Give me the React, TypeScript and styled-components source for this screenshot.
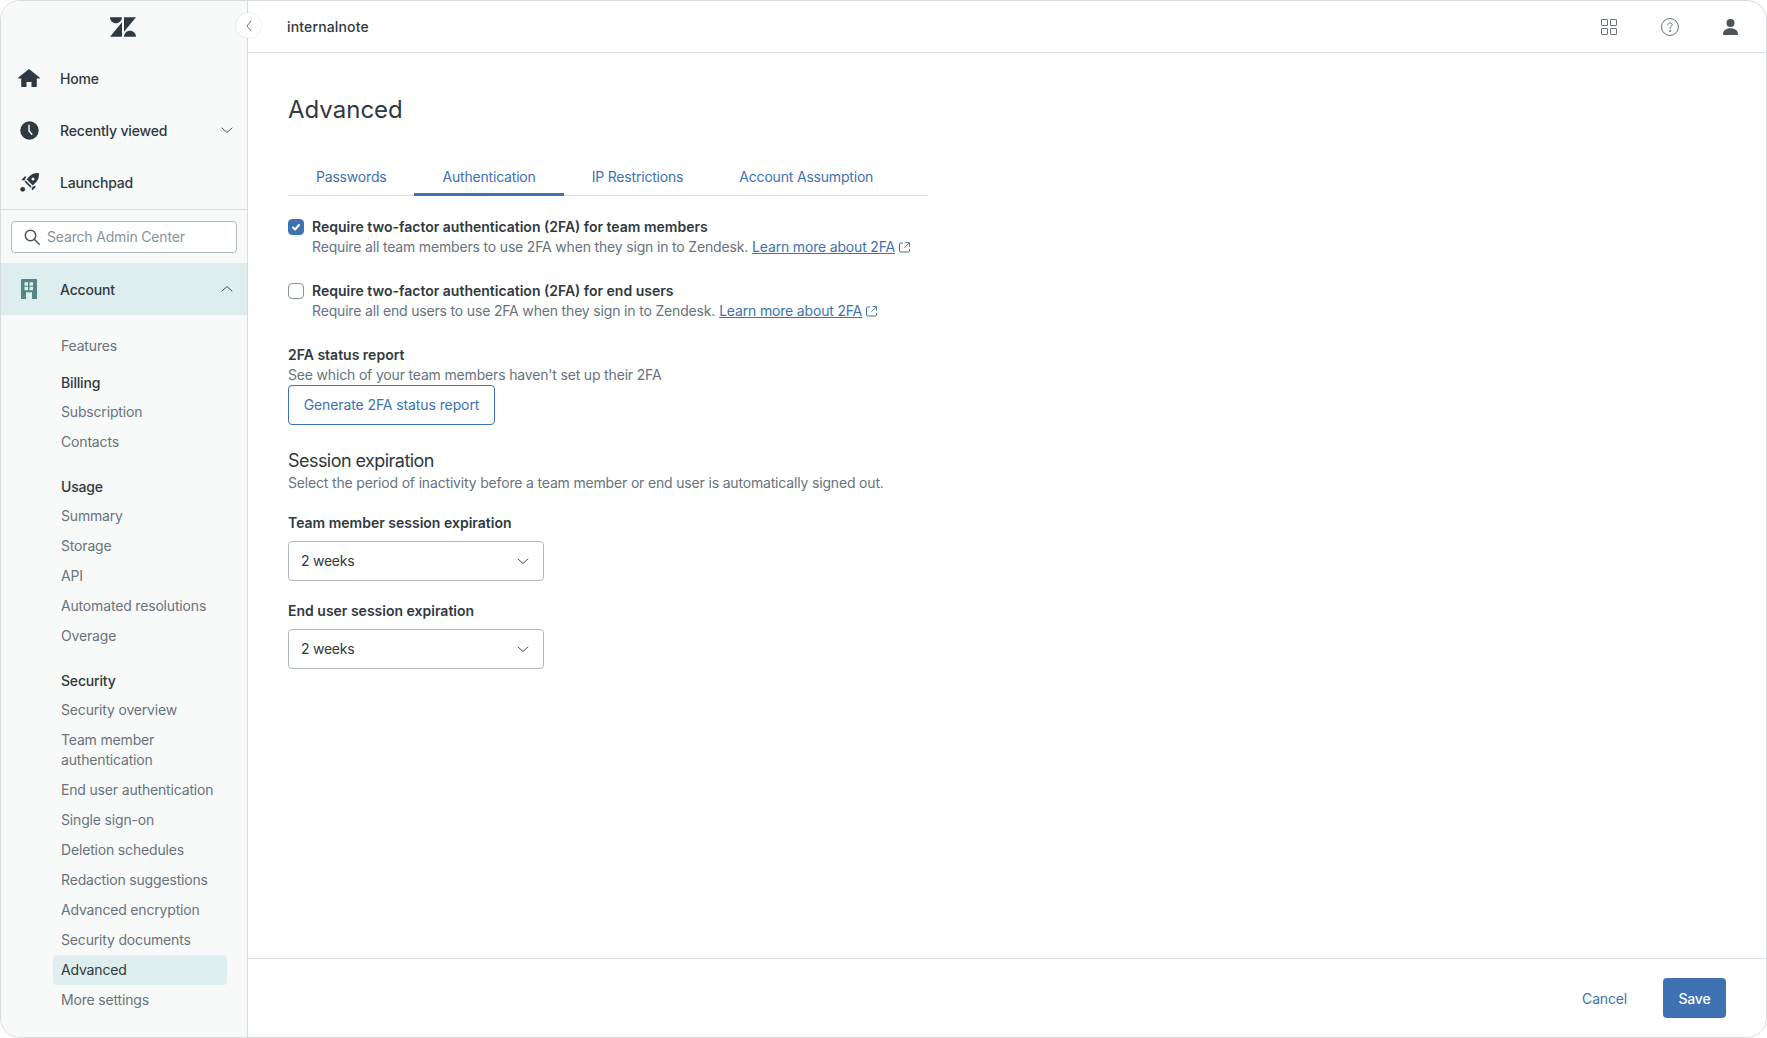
import React from 'react';
import styled, { createGlobalStyle } from 'styled-components';

const Global = createGlobalStyle`
  html, body { margin: 0; padding: 0; background: #fff; }
  body { font-family: Inter, "Liberation Sans", sans-serif; color: #2f3941; -webkit-font-smoothing: antialiased; letter-spacing: -0.17px; }
  * { box-sizing: border-box; }
`;

const Frame = styled.div`
  position: relative;
  width: 1767px;
  height: 1038px;
  display: flex;
  border: 1px solid #d8dcde;
  border-radius: 20px;
  overflow: hidden;
  background: #fff;
`;

const Sidebar = styled.aside`
  width: 247px;
  flex: none;
  background: #f8f9f9;
  border-right: 1px solid #d8dcde;
  display: flex;
  flex-direction: column;
`;

const LogoBar = styled.div`
  height: 51px;
  display: flex;
  align-items: center;
  justify-content: center;
  padding-right: 2px;
`;

const NavRow = styled.div<{ $active?: boolean }>`
  height: 52px;
  flex: none;
  display: flex;
  align-items: center;
  padding: 0 14px 0 17px;
  font-size: 14px;
  font-weight: 500;
  color: #2f3941;
  background: ${p => (p.$active ? '#deeded' : 'transparent')};
`;

const NavIcon = styled.span`
  width: 22px;
  height: 22px;
  margin-right: 20px;
  display: flex;
  align-items: center;
  justify-content: center;
  flex: none;
`;

const NavLabel = styled.span`
  flex: 1;
`;

const SearchWrap = styled.div`
  margin-top: 1px;
  border-top: 1px solid #d8dcde;
  padding: 11px 10px 10px;
`;

const SearchBox = styled.div`
  height: 32px;
  background: #fff;
  border: 1px solid #b0b8be;
  border-radius: 4px;
  display: flex;
  align-items: center;
  gap: 7px;
  padding: 0 12px 1px;
  font-size: 14px;
  color: #87929d;
`;

const SubNav = styled.nav`
  padding: 16px 20px 0 52px;
  display: flex;
  flex-direction: column;
`;

const SubItem = styled.div<{ $active?: boolean }>`
  min-height: 30px;
  display: flex;
  align-items: center;
  padding: 5px 8px;
  line-height: 20px;
  font-size: 14px;
  border-radius: 4px;
  color: ${p => (p.$active ? '#2f3941' : '#68737d')};
  background: ${p => (p.$active ? '#deeded' : 'transparent')};
`;

const SubHead = styled.div<{ $gap: number }>`
  margin-top: ${p => p.$gap}px;
  height: 30px;
  display: flex;
  align-items: center;
  padding: 0 8px;
  font-size: 14px;
  font-weight: 500;
  color: #2f3941;
`;

const CollapseButton = styled.div`
  position: absolute;
  left: 235px;
  top: 12px;
  width: 25px;
  height: 25px;
  border-radius: 50%;
  background: #fff;
  box-shadow: 0 0 2px rgba(47, 57, 65, 0.18);
  display: flex;
  align-items: center;
  justify-content: center;
`;

const Main = styled.main`
  flex: 1;
  min-width: 0;
  display: flex;
  flex-direction: column;
`;

const TopBar = styled.header`
  height: 52px;
  flex: none;
  border-bottom: 1px solid #d8dcde;
  display: flex;
  align-items: center;
  padding: 0 28px 0 39px;
  font-size: 14px;
  font-weight: 500;
  letter-spacing: 0.15px;
`;

const BrandName = styled.span`
  flex: 1;
`;

const TopIcons = styled.div`
  display: flex;
  align-items: center;
  gap: 44px;
`;

const Content = styled.div`
  flex: 1;
  padding: 0 40px;
  width: 720px;
`;

const Title = styled.h1`
  margin: 39px 0 0;
  font-size: 24px;
  line-height: 36px;
  font-weight: 400;
  letter-spacing: 0;
  color: #2f3941;
`;

const Tabs = styled.div`
  margin-top: 31px;
  height: 37px;
  width: 640px;
  display: flex;
  border-bottom: 1px solid #d8dcde;
`;

const Tab = styled.div<{ $active?: boolean }>`
  height: 37px;
  padding: 0 28px;
  display: flex;
  align-items: center;
  font-size: 14px;
  letter-spacing: -0.19px;
  color: #3e72b3;
  border-bottom: 3px solid ${p => (p.$active ? '#3e72b3' : 'transparent')};
`;

const CheckRow = styled.label<{ $top: number }>`
  margin-top: ${p => p.$top}px;
  display: grid;
  grid-template-columns: 16px 1fr;
  column-gap: 8px;
  align-items: start;
`;

const CheckBox = styled.span<{ $on?: boolean }>`
  width: 16px;
  height: 16px;
  margin-top: 2px;
  border-radius: 4px;
  border: 1px solid ${p => (p.$on ? '#3e72b3' : '#87929d')};
  background: ${p => (p.$on ? '#3e72b3' : '#fff')};
  display: flex;
  align-items: center;
  justify-content: center;
`;

const StrongText = styled.div`
  font-size: 14px;
  line-height: 20px;
  font-weight: 600;
  letter-spacing: 0;
  color: #2f3941;
`;

const Hint = styled.div`
  font-size: 14px;
  line-height: 20px;
  color: #68737d;
`;

const HintLink = styled.a`
  color: #3e72b3;
  text-decoration: underline;
  margin-left: 4px;
`;

const LinkGlyph = styled.svg`
  margin-left: 4px;
  vertical-align: -1px;
`;

const ReportBlock = styled.div`
  margin-top: 24px;
`;

const OutlineButton = styled.button`
  display: block;
  height: 40px;
  width: 207px;
  padding: 0 0 1px;
  background: #fff;
  border: 1px solid #3e72b3;
  border-radius: 4px;
  color: #3e72b3;
  font: 400 14px Inter, sans-serif;
  letter-spacing: -0.1px;
`;

const SectionTitle = styled.h2`
  margin: 24px 0 0;
  font-size: 18px;
  line-height: 24px;
  font-weight: 400;
  letter-spacing: -0.55px;
  color: #2f3941;
`;

const FieldLabel = styled(StrongText)<{ $top: number }>`
  margin-top: ${p => p.$top}px;
  margin-bottom: 8px;
`;

const Select = styled.div`
  width: 256px;
  height: 40px;
  background: #fff;
  border: 1px solid #b0b8be;
  border-radius: 4px;
  display: flex;
  align-items: center;
  justify-content: space-between;
  padding: 0 14px 1px 12px;
  font-size: 14px;
  letter-spacing: -0.25px;
  color: #2f3941;
`;

const Footer = styled.footer`
  height: 79px;
  flex: none;
  border-top: 1px solid #d8dcde;
  display: flex;
  align-items: center;
  justify-content: flex-end;
  gap: 36px;
  padding: 0 40px 0 0;
  font-size: 14px;
`;

const Cancel = styled.span`
  color: #3e72b3;
  font-weight: 400;
`;

const Save = styled.button`
  width: 63px;
  height: 40px;
  border: none;
  border-radius: 4px;
  background: #3e72b3;
  color: #fff;
  font: 500 14px Inter, sans-serif;
  letter-spacing: -0.17px;
`;

const Chevron = ({ up, color = '#49545c', size = 12 }: { up?: boolean; color?: string; size?: number }) => (
  <svg width={size} height={size} viewBox="0 0 12 12" fill="none">
    <path d={up ? 'M1 8l5-4.5L11 8' : 'M1 4l5 4.5L11 4'} stroke={color} strokeWidth="1" strokeLinecap="round" strokeLinejoin="round" />
  </svg>
);

const ChevronLeft = () => (
  <svg width="6" height="12" viewBox="0 0 6 12" fill="none">
    <path d="M5 1L1 6l4 5" stroke="#68737d" strokeWidth="1" strokeLinecap="round" strokeLinejoin="round" />
  </svg>
);

const External = () => (
  <LinkGlyph width="11" height="11" viewBox="0 0 11 11" fill="none" stroke="#3e72b3" strokeWidth="1">
    <path d="M4 1H1.5a1 1 0 0 0-1 1v7a1 1 0 0 0 1 1h8a1 1 0 0 0 1-1V7M6.5.6h4v4M10.2 1L5.5 5.7" />
  </LinkGlyph>
);

const ZendeskLogo = () => (
  <svg width="26" height="20" viewBox="0 0 26 19.4" fill="#2f3941">
    <path d="M12 4.9v14.5H0zM12 0c0 3.3-2.7 6-6 6S0 3.3 0 0zM14 19.4c0-3.3 2.7-6 6-6s6 2.7 6 6zM14 14.5V0h12z" />
  </svg>
);

const HomeIcon = () => (
  <svg width="22" height="18" viewBox="0 0 22 18" fill="#2f3941">
    <path d="M11 0L.3 8.6c-.4.4-.1 1 .4 1H3.2V17c0 .6.4 1 1 1h4.3v-5h5v5h4.3c.6 0 1-.4 1-1V9.6h2.5c.5 0 .8-.6.4-1z" />
  </svg>
);

const ClockIcon = () => (
  <svg width="19" height="19" viewBox="0 0 19 19">
    <circle cx="9.5" cy="9.5" r="9.2" fill="#2f3941" />
    <path d="M9 4.2v5.6l2.8 3.4" fill="none" stroke="#f8f9f9" strokeWidth="1.5" strokeLinecap="round" strokeLinejoin="round" />
  </svg>
);

const RocketIcon = () => (
  <svg width="19" height="19" viewBox="0 0 19 19" fill="#2f3941">
    <path d="M18.8.2c-3.4-.5-6.7.5-9 2.8L6.6 6.2l6.2 6.2 3.2-3.2c2.3-2.3 3.3-5.6 2.8-9z" />
    <path d="M6.4 3.6H4.6L1.4 7l3.1.5zM15.4 12.6v1.8L12 17.6l-.5-3.1zM5.6 7.4l-1 1.4 5.6 5.6 1.4-1z" />
    <circle cx="2.7" cy="16.3" r="2.4" />
    <circle cx="13" cy="6" r="1.5" fill="#f8f9f9" />
  </svg>
);

const BuildingIcon = () => (
  <svg width="16" height="20" viewBox="0 0 16 20">
    <path fill="#568585" fillRule="evenodd" d="M1 0h14a1 1 0 0 1 1 1v19h-5v-6.7H5V20H0V1a1 1 0 0 1 1-1zM3.5 3.3v3.4H7V3.3zm5 0v3.4H12V3.3zM3.5 7.8v3.4H7V7.8zm5 0v3.4H12V7.8z" />
  </svg>
);

const SearchIcon = () => (
  <svg width="16" height="16" viewBox="0 0 16 16" fill="none" stroke="#49545c" strokeWidth="1.5" strokeLinecap="round">
    <circle cx="6.5" cy="6.5" r="5.2" />
    <path d="M10.5 10.5l4.7 4.7" />
  </svg>
);

const GridIcon = () => (
  <svg width="16" height="16" viewBox="0 0 16 16" fill="none" stroke="#68737d" strokeWidth="1">
    <rect x=".5" y=".5" width="6" height="6" rx=".4" />
    <rect x="9.5" y=".5" width="6" height="6" rx=".4" />
    <rect x=".5" y="9.5" width="6" height="6" rx=".4" />
    <rect x="9.5" y="9.5" width="6" height="6" rx=".4" />
  </svg>
);

const HelpIcon = () => (
  <svg width="18" height="18" viewBox="0 0 18 18" fill="none" stroke="#68737d" strokeWidth="1" strokeLinecap="round">
    <circle cx="9" cy="9" r="8.5" />
    <path d="M6.8 7c0-1.3 1-2.1 2.2-2.1s2.2.8 2.2 2c0 1.7-2.2 1.7-2.2 3.4v.4" />
    <circle cx="9" cy="13" r=".5" fill="#68737d" />
  </svg>
);

const UserIcon = () => (
  <svg width="15" height="16" viewBox="0 0 15 16" fill="#49545c">
    <circle cx="7.5" cy="4" r="4" />
    <path d="M0 15.2c0-3.6 2.9-6 7.5-6s7.5 2.4 7.5 6c0 .5-.3.8-.8.8H.8c-.5 0-.8-.3-.8-.8z" />
  </svg>
);

const billing = ['Subscription', 'Contacts'];
const usage = ['Summary', 'Storage', 'API', 'Automated resolutions', 'Overage'];
const security = [
  'Security overview',
  'Team member authentication',
  'End user authentication',
  'Single sign-on',
  'Deletion schedules',
  'Redaction suggestions',
  'Advanced encryption',
  'Security documents',
];

export default function App() {
  return (
    <>
      <Global />
      <Frame>
        <Sidebar>
          <LogoBar>
            <ZendeskLogo />
          </LogoBar>
          <NavRow>
            <NavIcon><HomeIcon /></NavIcon>
            <NavLabel>Home</NavLabel>
          </NavRow>
          <NavRow>
            <NavIcon><ClockIcon /></NavIcon>
            <NavLabel>Recently viewed</NavLabel>
            <Chevron />
          </NavRow>
          <NavRow>
            <NavIcon><RocketIcon /></NavIcon>
            <NavLabel>Launchpad</NavLabel>
          </NavRow>
          <SearchWrap>
            <SearchBox>
              <SearchIcon />
              Search Admin Center
            </SearchBox>
          </SearchWrap>
          <NavRow $active>
            <NavIcon><BuildingIcon /></NavIcon>
            <NavLabel>Account</NavLabel>
            <Chevron up />
          </NavRow>
          <SubNav>
            <SubItem>Features</SubItem>
            <SubHead $gap={6}>Billing</SubHead>
            {billing.map(t => <SubItem key={t}>{t}</SubItem>)}
            <SubHead $gap={14}>Usage</SubHead>
            {usage.map(t => <SubItem key={t}>{t}</SubItem>)}
            <SubHead $gap={14}>Security</SubHead>
            {security.map(t => <SubItem key={t}>{t}</SubItem>)}
            <SubItem $active>Advanced</SubItem>
            <SubItem>More settings</SubItem>
          </SubNav>
        </Sidebar>
        <CollapseButton>
          <ChevronLeft />
        </CollapseButton>
        <Main>
          <TopBar>
            <BrandName>internalnote</BrandName>
            <TopIcons>
              <GridIcon />
              <HelpIcon />
              <UserIcon />
            </TopIcons>
          </TopBar>
          <Content>
            <Title>Advanced</Title>
            <Tabs>
              <Tab>Passwords</Tab>
              <Tab $active>Authentication</Tab>
              <Tab>IP Restrictions</Tab>
              <Tab>Account Assumption</Tab>
            </Tabs>
            <CheckRow $top={21}>
              <CheckBox $on>
                <svg width="10" height="10" viewBox="0 0 10 10" fill="none" stroke="#fff" strokeWidth="2" strokeLinecap="round" strokeLinejoin="round">
                  <path d="M2 5.5l2 2 4-4.5" />
                </svg>
              </CheckBox>
              <StrongText>Require two-factor authentication (2FA) for team members</StrongText>
              <span />
              <Hint>
                Require all team members to use 2FA when they sign in to Zendesk.
                <HintLink>Learn more about 2FA</HintLink>
                <External />
              </Hint>
            </CheckRow>
            <CheckRow $top={24}>
              <CheckBox />
              <StrongText>Require two-factor authentication (2FA) for end users</StrongText>
              <span />
              <Hint>
                Require all end users to use 2FA when they sign in to Zendesk.
                <HintLink>Learn more about 2FA</HintLink>
                <External />
              </Hint>
            </CheckRow>
            <ReportBlock>
              <StrongText>2FA status report</StrongText>
              <Hint>See which of your team members haven't set up their 2FA</Hint>
              <OutlineButton>Generate 2FA status report</OutlineButton>
            </ReportBlock>
            <SectionTitle>Session expiration</SectionTitle>
            <Hint>Select the period of inactivity before a team member or end user is automatically signed out.</Hint>
            <FieldLabel $top={20}>Team member session expiration</FieldLabel>
            <Select>
              2 weeks
              <Chevron />
            </Select>
            <FieldLabel $top={20}>End user session expiration</FieldLabel>
            <Select>
              2 weeks
              <Chevron />
            </Select>
          </Content>
          <Footer>
            <Cancel>Cancel</Cancel>
            <Save>Save</Save>
          </Footer>
        </Main>
      </Frame>
    </>
  );
}
